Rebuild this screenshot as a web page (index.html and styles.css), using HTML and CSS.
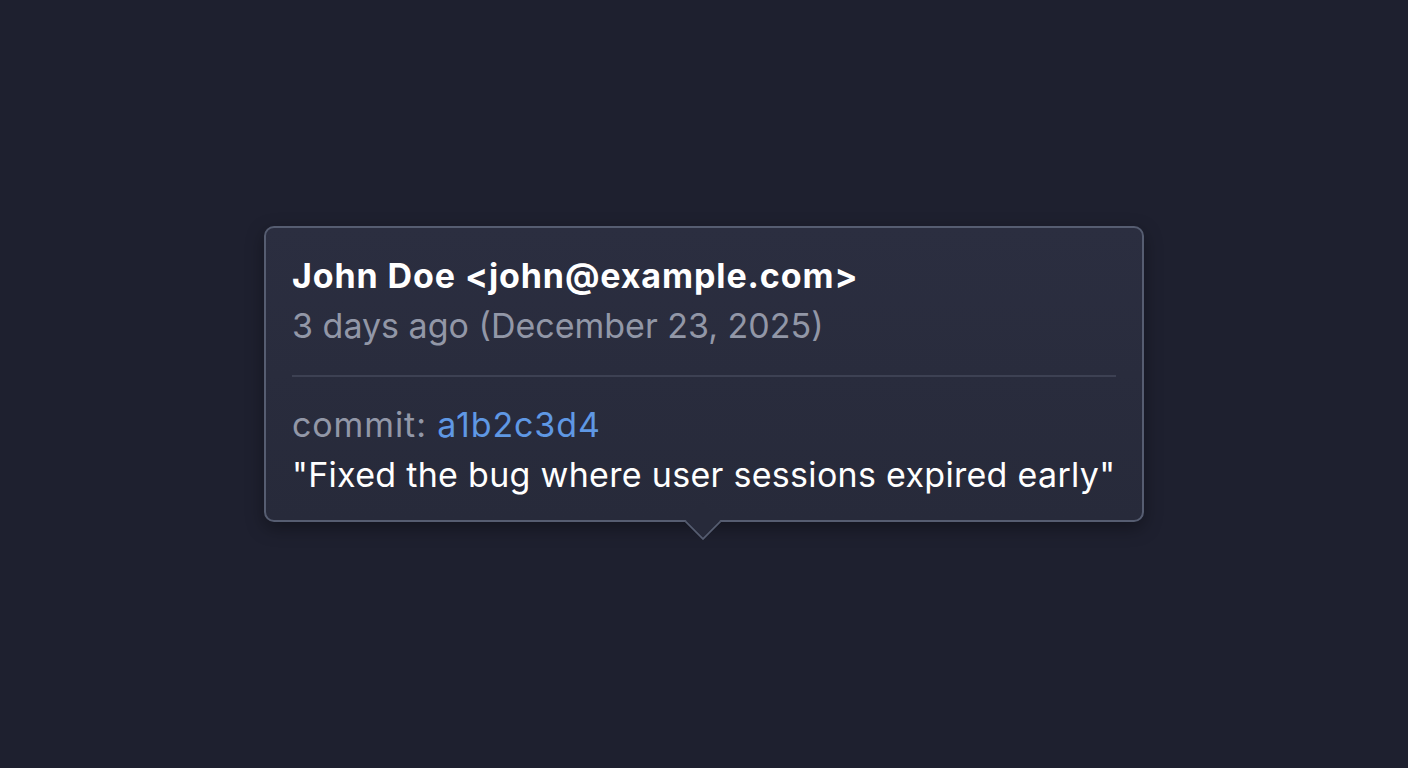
FILE: index.html
```html
<!DOCTYPE html>
<html>
<head>
<meta charset="utf-8">
<link rel="stylesheet" href="styles.css">
</head>
<body>
<div class="stage">
  <div class="tooltip">
    <div class="author">John Doe &lt;john@example.com&gt;</div>
    <div class="date">3 days ago (December 23, 2025)</div>
    <div class="divider"></div>
    <div class="commit"><span class="label">commit:</span> <span class="hash">a1b2c3d4</span></div>
    <div class="message">"Fixed the bug where user sessions expired early"</div>
    <div class="arrow"></div>
  </div>
</div>
</body>
</html>
```
FILE: styles.css
```css
html, body {
  margin: 0;
  padding: 0;
}
body {
  background: #1e202f;
  width: 1408px;
  height: 768px;
  overflow: hidden;
  font-family: Inter, "Noto Sans", sans-serif;
}
.stage {
  height: 768px;
  display: flex;
  align-items: flex-start;
  justify-content: center;
  padding-top: 226px;
  box-sizing: border-box;
}
.tooltip {
  position: relative;
  width: 880px;
  box-sizing: border-box;
  padding: 23px 26px 20px 26px;
  border: 2px solid #565d71;
  border-radius: 10px;
  background: linear-gradient(180deg, #2b2e40 0%, #272a3a 100%);
  box-shadow: 0 6px 18px rgba(0,0,0,0.35);
}
.author {
  color: #ffffff;
  font-size: 34px;
  font-weight: 700;
  line-height: 50px;
  letter-spacing: 0.9px;
}
.date {
  color: #9297a7;
  font-size: 34px;
  line-height: 50px;
}
.divider {
  height: 2px;
  background: #3d4153;
  margin: 24px 0 23px 0;
}
.commit {
  font-size: 34px;
  line-height: 50px;
  color: #9297a7;
  letter-spacing: 0.9px;
}
.hash {
  color: #5f98e4;
}
.message {
  color: #ffffff;
  font-size: 34px;
  line-height: 50px;
  letter-spacing: 0.3px;
}
.arrow {
  position: absolute;
  left: 50%;
  bottom: -15px;
  width: 26px;
  height: 26px;
  margin-left: -14px;
  background: #272a3a;
  border-right: 2px solid #565d71;
  border-bottom: 2px solid #565d71;
  border-bottom-right-radius: 2px;
  transform: rotate(45deg);
  box-sizing: border-box;
}
```
